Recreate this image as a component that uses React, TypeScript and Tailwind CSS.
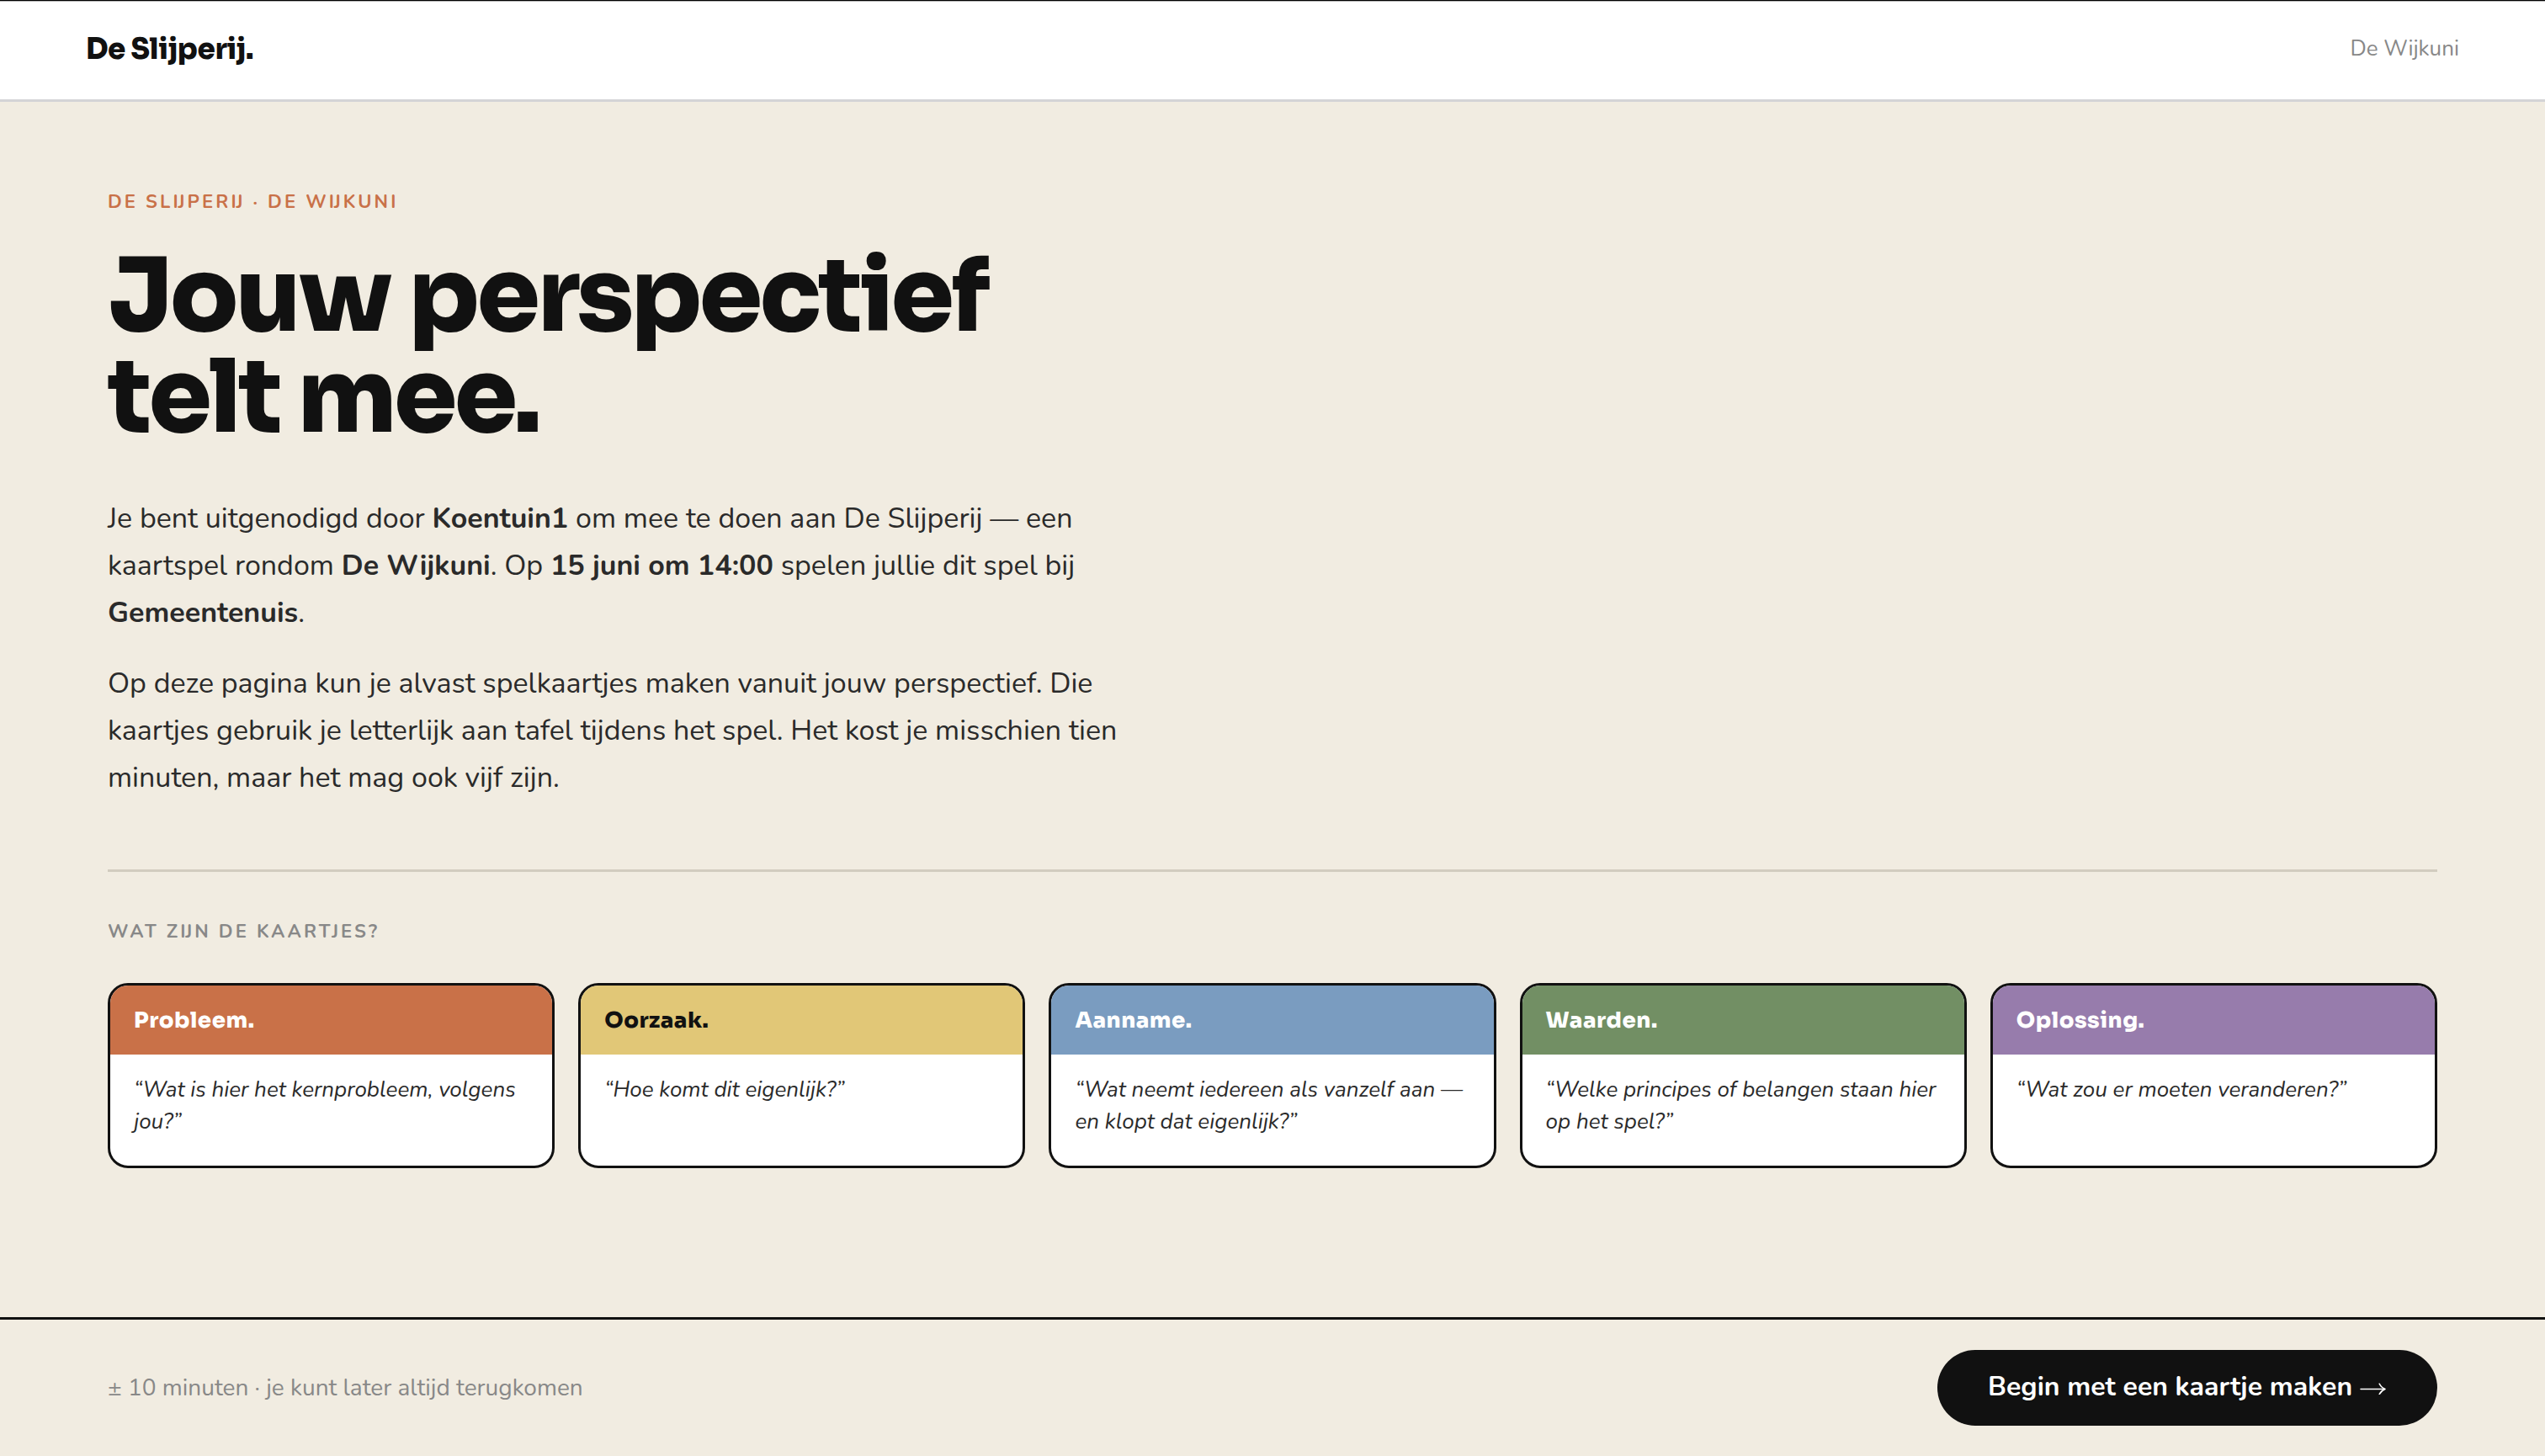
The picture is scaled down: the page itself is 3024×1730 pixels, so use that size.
import React from 'react'

interface CardType {
    title: string
    question: string
    header: string
}

const cards: Array<CardType> = [
    { title: 'Probleem.', question: '“Wat is hier het kernprobleem, volgens jou?”', header: 'bg-[#c97148] text-white' },
    { title: 'Oorzaak.', question: '“Hoe komt dit eigenlijk?”', header: 'bg-[#e1c777] text-[#111111]' },
    { title: 'Aanname.', question: '“Wat neemt iedereen als vanzelf aan — en klopt dat eigenlijk?”', header: 'bg-[#7a9cc0] text-white' },
    { title: 'Waarden.', question: '“Welke principes of belangen staan hier op het spel?”', header: 'bg-[#728f64] text-white' },
    { title: 'Oplossing.', question: '“Wat zou er moeten veranderen?”', header: 'bg-[#977cac] text-white' },
]

const Card: React.FC<{ data: CardType }> = ({ data }) => (
    <div className="h-[220px] overflow-hidden rounded-[24px] border-[3px] border-[#111111] bg-white">
        <div className={`flex h-[82px] items-center px-7 pt-0.5 font-['Sora',Inter,sans-serif] text-[26px] font-extrabold leading-[32px] tracking-[0.02em] ${data.header}`}>
            {data.title}
        </div>
        <div className="px-7 pt-[23px] text-[26px] italic leading-[38px] text-[#2a2a2a]">{data.question}</div>
    </div>
)

const Header = () => (
    <header className="border-b-[3px] border-t border-b-[#d4d4d6] border-t-black bg-white">
        <div className="flex h-[117px] items-center justify-between border-t border-[#b4b4b4] px-[102px] pb-1">
            <div className="pt-0.5 font-['Sora',Inter,sans-serif] text-[34px] font-extrabold leading-[44px] tracking-[-0.4px] text-[#111111]">De Slijperij.</div>
            <div className="text-[26px] leading-[36px] text-[#888888]">De Wijkuni</div>
        </div>
    </header>
)

const Arrow = () => (
    <svg width="32" height="14" viewBox="0 0 32 14" fill="none" stroke="currentColor" strokeWidth="1.5" strokeLinecap="round" strokeLinejoin="round" aria-hidden="true">
        <path d="M1 7.5H29.5" />
        <path d="M23.2 1.2C24.6 4 26.8 6.3 30 7.5C26.8 8.7 24.6 11 23.2 13.6" />
    </svg>
)

const Footer = () => (
    <footer className="flex h-[165px] items-center justify-between border-t-[3px] border-[#111111] px-32">
        <div className="text-[28px] leading-[38px] text-[#888888]">± 10 minuten · je kunt later altijd terugkomen</div>
        <button className="flex h-[90px] w-[594px] items-center gap-[9px] rounded-full bg-[#111111] pb-0.5 pl-[60px] text-[32px] font-bold leading-[44px] text-white">
            Begin met een kaartje maken
            <span className="pt-1"><Arrow /></span>
        </button>
    </footer>
)

export default function App() {
    return (
        <div lang="nl" className="flex h-[1730px] flex-col bg-[#f1ece1] font-['Nunito',Lato,sans-serif]">
            <Header />

            <main className="flex-1 px-32 pt-[103px]">
                {/* Intro */}
                <div className="text-[22px] font-bold uppercase leading-[32px] tracking-[0.14em] text-[#c97148]">De Slijperij · De Wijkuni</div>
                <h1 className="mt-[37px] font-['Sora',Inter,sans-serif] text-[120px] font-extrabold leading-[120px] tracking-[-0.03em] text-[#111111]">
                    Jouw perspectief
                    <br />
                    telt mee.
                </h1>
                <div className="mt-[55px] w-[1240px] space-y-7 text-[34px] leading-[56px] text-[#2a2a2a]">
                    <p>
                        Je bent uitgenodigd door <strong>Koentuin1</strong> om mee te doen aan De Slijperij — een kaartspel rondom <strong>De Wijkuni</strong>. Op <strong>15 juni om 14:00</strong> spelen jullie dit spel bij <strong>Gemeentenuis</strong>.
                    </p>
                    <p>
                        Op deze pagina kun je alvast spelkaartjes maken vanuit jouw perspectief. Die kaartjes gebruik je letterlijk aan tafel tijdens het spel. Het kost je misschien tien minuten, maar het mag ook vijf zijn.
                    </p>
                </div>

                {/* Cards */}
                <div className="mt-[81px] border-t-[3px] border-[#d2ccbf] pt-[55px]">
                    <div className="text-[22px] font-bold uppercase leading-[32px] tracking-[0.14em] text-[#888888]">Wat zijn de kaartjes?</div>
                    <div className="mt-[45px] grid grid-cols-5 gap-7">
                        {cards.map((item) => (
                            <Card key={item.title} data={item} />
                        ))}
                    </div>
                </div>
            </main>

            <Footer />
        </div>
    )
}
